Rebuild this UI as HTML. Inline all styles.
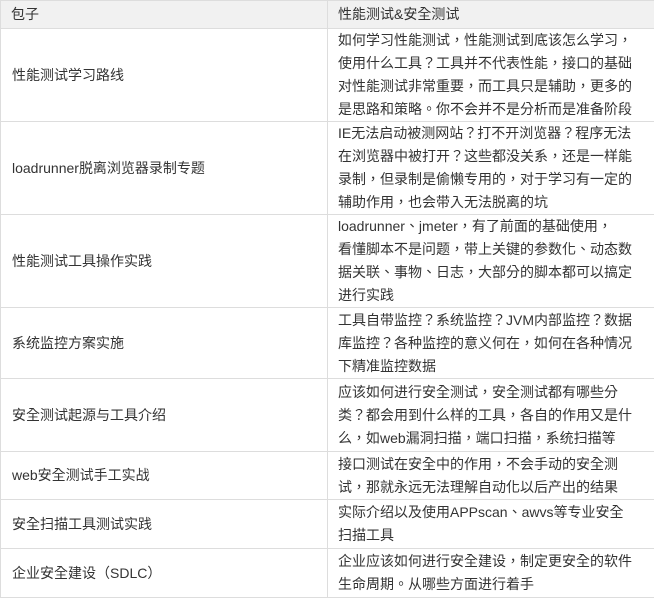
<!DOCTYPE html>
<html><head><meta charset="utf-8"><style>
html,body{margin:0;padding:0;background:#fff;}
table{border-collapse:collapse;width:654px;table-layout:fixed;font-family:"Liberation Sans","Noto Sans CJK TC",sans-serif;font-size:14px;color:#333;}
td,th{border:1px solid #ddd;padding:0 10px;line-height:23px;vertical-align:middle;text-align:left;font-weight:normal;}
th{background:#f1f1f1;height:27px;}
td.l{padding-left:11px;}
td.r{padding:0 0 0 10px;white-space:nowrap;overflow:hidden;}
</style></head><body>
<table>
<colgroup><col style="width:327px"><col style="width:327px"></colgroup>
<tr><th>包子</th><th>性能测试&amp;安全测试</th></tr>
<tr style="height:93px"><td class="l">性能测试学习路线</td><td class="r">如何学习性能测试，性能测试到底该怎么学习，<br>使用什么工具？工具并不代表性能，接口的基础<br>对性能测试非常重要，而工具只是辅助，更多的<br>是思路和策略。你不会并不是分析而是准备阶段</td></tr>
<tr style="height:93px"><td class="l">loadrunner脱离浏览器录制专题</td><td class="r">IE无法启动被测网站？打不开浏览器？程序无法<br>在浏览器中被打开？这些都没关系，还是一样能<br>录制，但录制是偷懒专用的，对于学习有一定的<br>辅助作用，也会带入无法脱离的坑</td></tr>
<tr style="height:92px"><td class="l">性能测试工具操作实践</td><td class="r">loadrunner、jmeter，有了前面的基础使用，<br>看懂脚本不是问题，带上关键的参数化、动态数<br>据关联、事物、日志，大部分的脚本都可以搞定<br>进行实践</td></tr>
<tr style="height:71px"><td class="l">系统监控方案实施</td><td class="r">工具自带监控？系统监控？JVM内部监控？数据<br>库监控？各种监控的意义何在，如何在各种情况<br>下精准监控数据</td></tr>
<tr style="height:73px"><td class="l">安全测试起源与工具介绍</td><td class="r">应该如何进行安全测试，安全测试都有哪些分<br>类？都会用到什么样的工具，各自的作用又是什<br>么，如web漏洞扫描，端口扫描，系统扫描等</td></tr>
<tr style="height:48px"><td class="l">web安全测试手工实战</td><td class="r">接口测试在安全中的作用，不会手动的安全测<br>试，那就永远无法理解自动化以后产出的结果</td></tr>
<tr style="height:49px"><td class="l">安全扫描工具测试实践</td><td class="r">实际介绍以及使用APPscan、awvs等专业安全<br>扫描工具</td></tr>
<tr style="height:49px"><td class="l">企业安全建设（SDLC）</td><td class="r">企业应该如何进行安全建设，制定更安全的软件<br>生命周期。从哪些方面进行着手</td></tr>
</table>
</body></html>
